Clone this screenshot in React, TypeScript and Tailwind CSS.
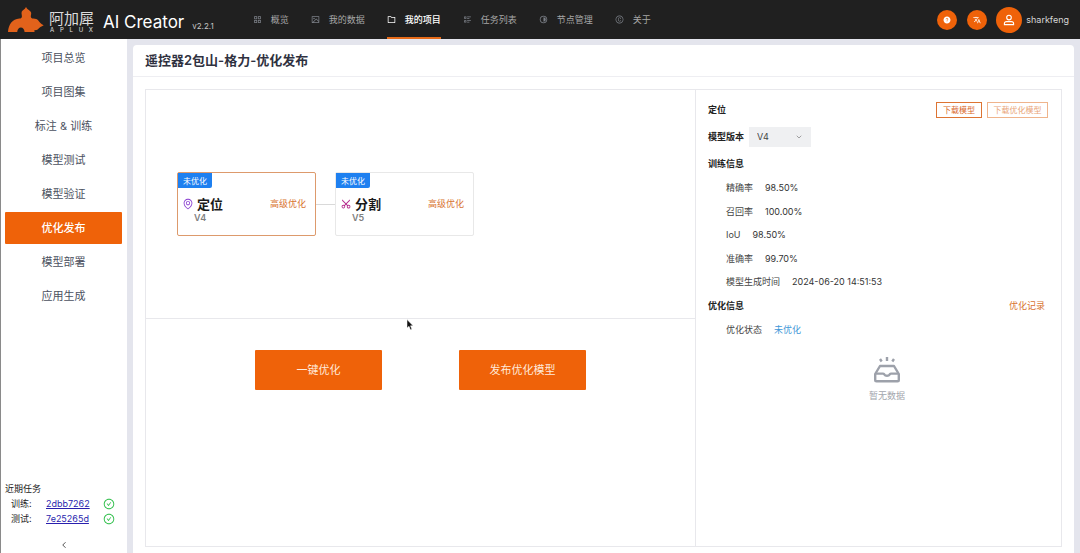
import React from "react";
import {
  AiOutlineCheckCircle,
  AiOutlineCopyright,
  AiOutlineEnvironment,
  AiOutlineScissor,
  AiFillQuestionCircle,
} from "react-icons/ai";
import { MdTranslate } from "react-icons/md";
import {
  RiContrastLine,
  RiFolderLine,
  RiFunctionLine,
  RiImageLine,
  RiListCheck2,
} from "react-icons/ri";
import { ChevronDown, ChevronLeft } from "lucide-react";

type IconType = React.ComponentType<{ className?: string }>;

const navItems: { label: string; Icon: IconType; active?: boolean }[] = [
  { label: "概览", Icon: RiFunctionLine },
  { label: "我的数据", Icon: RiImageLine },
  { label: "我的项目", Icon: RiFolderLine, active: true },
  { label: "任务列表", Icon: RiListCheck2 },
  { label: "节点管理", Icon: RiContrastLine },
  { label: "关于", Icon: AiOutlineCopyright },
];

const sideItems = [
  "项目总览",
  "项目图集",
  "标注 & 训练",
  "模型测试",
  "模型验证",
  "优化发布",
  "模型部署",
  "应用生成",
];

const metrics = [
  ["精确率", "98.50%"],
  ["召回率", "100.00%"],
  ["IoU", "98.50%"],
  ["准确率", "99.70%"],
  ["模型生成时间", "2024-06-20 14:51:53"],
];

const tasks = [
  ["训练:", "2dbb7262"],
  ["测试:", "7e25265d"],
];

function Logo() {
  return (
    <svg viewBox="0 0 36 26" className="h-[26px] w-9" fill="#e2621b" aria-hidden="true">
      <path d="M0 25C.5 17.500 4.500 12.200 11.300 11.600c1.600-.2 2.700-.9 2.600-2.400-.1-1.700-.6-2.700-.2-4.400C14.300 3.200 16.700 2.800 18 0c1.300 2.800 3.700 3.200 4.700 4.800 1 1.500.3 2.700.1 4.400-.1 1.500 1 2.200 2.600 2.400 2.200.2 3.600.2 4.900 1.900 1.200 1.700 2.600 3.400 5.400 4.700-2.500 1.400-4.300 2.200-5.500 3.900-.9 1.200-2 1.200-3.700 1V25h-9.900c-.3-2.600-1.700-4.400-3.700-4.400S9.500 22.400 9.200 25z" />
    </svg>
  );
}

function UserGlyph() {
  return (
    <svg viewBox="0 0 12 12" className="size-3" fill="none" stroke="white" strokeWidth="1.1" aria-hidden="true">
      <circle cx="6" cy="3.6" r="2.3" />
      <path d="M3.6 7.600h4.800c1.300 0 2.200.9 2.200 2v1H1.400v-1c0-1.100.9-2 2.200-2z" />
    </svg>
  );
}

function EmptyTray() {
  return (
    <svg viewBox="0 0 28 28" className="size-7" fill="none" stroke="#9da1aa" strokeWidth="2.4" strokeLinejoin="round" aria-hidden="true">
      <path d="M7 10h14l4.800 8v6c0 .8-.5 1.300-1.300 1.300h-21c-.8 0-1.300-.5-1.300-1.300v-6z" />
      <path d="M2.200 17.600h7.700c.6 0 1 .3 1.300.7.6.9 1.600 1.400 2.800 1.400s2.200-.5 2.800-1.400c.3-.4.7-.7 1.300-.7h7.700" />
      <path d="M14 1v4M7 3l1.700 2.500M21 3l-1.700 2.500" />
    </svg>
  );
}

function ModelNode({
  name,
  version,
  Icon,
  iconClass,
  borderClass,
}: {
  name: string;
  version: string;
  Icon: IconType;
  iconClass: string;
  borderClass: string;
}) {
  return (
    <article className={`h-16 w-[139px] rounded-xs border bg-white ${borderClass}`}>
      <span className="flex h-[15px] w-[34px] items-center justify-center rounded-br-xs bg-[#1e80f0] text-[8px] text-white">
        未优化
      </span>
      <div className="mt-2 flex h-4 items-center pr-[9px] pl-1">
        <Icon className={`size-3 ${iconClass}`} />
        <h3 className="ml-[3px] text-[13px] leading-4 font-bold text-[#1a1a1a]">{name}</h3>
        <button type="button" className="ml-auto text-[9px] text-[#d8732f]">
          高级优化
        </button>
      </div>
      <p className="pl-4 text-[9px] leading-3 font-semibold text-[#808080]">{version}</p>
    </article>
  );
}

export default function App() {
  return (
    <div className="flex min-h-screen flex-col bg-[#e4e5ed] font-[Inter,'Noto_Sans_CJK_SC',sans-serif] text-[9px] text-[#333]">
      <header className="flex h-[39px] items-center bg-[#202020] pr-[11px] pl-2 text-white">
        <Logo />
        <div className="ml-[5px] flex w-[45px] flex-col pt-1">
          <span className="text-[15px] leading-4 text-[#dcdcdc]">阿加犀</span>
          <span className="flex justify-between px-px text-[6px] leading-[6px] text-[#e0e0e0]">
            {["A", "P", "L", "U", "X"].map((c) => (
              <span key={c}>{c}</span>
            ))}
          </span>
        </div>
        <span className="ml-[9px] pt-1 text-[17px] leading-5">AI Creator</span>
        <span className="ml-2 pt-3 text-[8px] leading-3 text-[#c8c8c8]">v2.2.1</span>
        <nav className="ml-[39px] flex h-full gap-[22px]">
          {navItems.map(({ label, Icon, active }) => (
            <a
              key={label}
              href="#"
              className={`flex items-center gap-[9px] border-y-2 border-t-transparent whitespace-nowrap ${
                active
                  ? "border-b-[#e86c1a] font-medium text-white"
                  : "border-b-transparent text-[#a6a6a6]"
              }`}
            >
              <Icon className={`size-[9px] ${active ? "text-white" : "text-[#7c8088]"}`} />
              {label}
            </a>
          ))}
        </nav>
        <div className="ml-auto flex items-center">
          <button type="button" aria-label="帮助" className="flex size-5 items-center justify-center rounded-full bg-[#ef6209]">
            <AiFillQuestionCircle className="size-2" />
          </button>
          <button type="button" aria-label="语言" className="ml-2.5 flex size-5 items-center justify-center rounded-full bg-[#ef6209]">
            <MdTranslate className="size-2" />
          </button>
          <button type="button" className="ml-[9px] flex items-center gap-1">
            <span className="flex size-[26px] items-center justify-center rounded-full bg-[#ef6209]">
              <UserGlyph />
            </span>
            <span className="text-[9px] text-[#d6d6d6]">sharkfeng</span>
          </button>
        </div>
      </header>

      <div className="flex flex-1 gap-1.5">
        <aside className="flex w-[127px] flex-col border-l border-[#8a8a8a] bg-white">
          <nav className="flex flex-col gap-[2px] pt-[3px] pr-[5px] pl-1">
            {sideItems.map((item) => (
              <a
                key={item}
                href="#"
                className={`flex h-8 items-center justify-center rounded-[1px] text-[11px] ${
                  item === "优化发布" ? "bg-[#ef6209] font-medium text-white" : "text-[#4b5160]"
                }`}
              >
                {item}
              </a>
            ))}
          </nav>
          <section className="mt-auto pl-1">
            <h2 className="text-[9px] leading-[14px] text-[#222]">近期任务</h2>
            {tasks.map(([name, id]) => (
              <div key={id} className="flex h-[15px] items-center pl-1.5 leading-[15px]">
                <span className="w-[35px] text-[#222]">{name}</span>
                <a href="#" className="w-[57px] text-[#2a1fae] underline">
                  {id}
                </a>
                <AiOutlineCheckCircle className="size-3 text-[#2fbf4a]" />
              </div>
            ))}
          </section>
          <button type="button" aria-label="收起" className="mt-[11px] flex h-4 items-center justify-center">
            <ChevronLeft className="size-2.5 text-[#333]" />
          </button>
        </aside>

        <main className="mt-1.5 mr-1.5 flex flex-1 flex-col rounded-t-sm bg-white">
          <h1 className="flex h-8 items-center border-b border-[#eeeef2] px-3 text-[13px] font-semibold text-[#2f3140]">
            遥控器2包山-格力-优化发布
          </h1>
          <div className="mx-3 mt-3 mb-1.5 flex flex-1 border border-[#e8e8ec]">
            <div className="flex flex-1 flex-col">
              <div className="flex h-[229px] items-center border-b border-[#e8e8ec] pl-[31px]">
                <ModelNode
                  name="定位"
                  version="V4"
                  Icon={AiOutlineEnvironment}
                  iconClass="text-[#8a3fd1]"
                  borderClass="border-[#dd9a6c]"
                />
                <span className="h-px w-[19px] bg-[#d9d9d9]" />
                <ModelNode
                  name="分割"
                  version="V5"
                  Icon={AiOutlineScissor}
                  iconClass="-rotate-90 text-[#b5288c]"
                  borderClass="border-[#e8e8e8]"
                />
              </div>
              <div className="relative flex justify-center gap-[77px] pt-[31px]">
                <button type="button" className="h-10 w-[127px] rounded-[1px] bg-[#ef6209] text-[11px] text-[#ffeadb]">
                  一键优化
                </button>
                <button type="button" className="h-10 w-[127px] rounded-[1px] bg-[#ef6209] text-[11px] text-[#ffeadb]">
                  发布优化模型
                </button>
                <svg viewBox="0 0 8 12" className="absolute top-0 left-[260px] h-3 w-2" aria-hidden="true">
                  <path d="M1 .5v8.600l2-1.800 1.400 3.500 1.500-.6-1.400-3.400h2.600z" fill="#111" stroke="#fff" strokeWidth=".5" />
                </svg>
              </div>
            </div>

            <section className="w-[366px] border-l border-[#e8e8ec] pr-[13px] pl-3">
              <div className="mt-2 flex h-6 items-center">
                <h2 className="font-bold text-[#222]">定位</h2>
                <button type="button" className="ml-auto h-4 w-[46px] border border-[#dd7433] text-[8px] text-[#d9682a]">
                  下载模型
                </button>
                <button type="button" className="ml-[5px] h-4 w-[61px] border border-[#efb48c] text-[8px] text-[#e9a578]">
                  下载优化模型
                </button>
              </div>
              <div className="mt-[3px] flex h-6 items-center">
                <label htmlFor="version" className="font-bold text-[#222]">
                  模型版本
                </label>
                <div className="relative ml-[5px] flex items-center">
                  <select id="version" className="h-5 w-[62px] appearance-none bg-[#eff0f2] pl-2 text-[9px] text-[#444]">
                    <option>V4</option>
                  </select>
                  <ChevronDown className="pointer-events-none absolute right-2 size-2 text-[#777]" />
                </div>
              </div>
              <h2 className="mt-[3px] flex h-6 items-center font-bold text-[#222]">训练信息</h2>
              <dl className="grid h-[118px] grid-rows-5 pl-[18px]">
                {metrics.map(([k, v]) => (
                  <div key={k} className="flex items-center gap-3">
                    <dt className="text-[#444]">{k}</dt>
                    <dd className="text-[#333]">{v}</dd>
                  </div>
                ))}
              </dl>
              <div className="flex h-6 items-center justify-between">
                <h2 className="font-bold text-[#222]">优化信息</h2>
                <button type="button" className="mr-[3px] text-[#d8732f]">
                  优化记录
                </button>
              </div>
              <dl className="flex h-6 items-center gap-3 pl-[18px]">
                <dt className="text-[#444]">优化状态</dt>
                <dd className="text-[#3f97d8]">未优化</dd>
              </dl>
              <div className="mt-3.5 flex flex-col items-center gap-1 pl-[18px]">
                <EmptyTray />
                <p className="leading-4 text-[#a3a6ad]">暂无数据</p>
              </div>
            </section>
          </div>
        </main>
      </div>
    </div>
  );
}
